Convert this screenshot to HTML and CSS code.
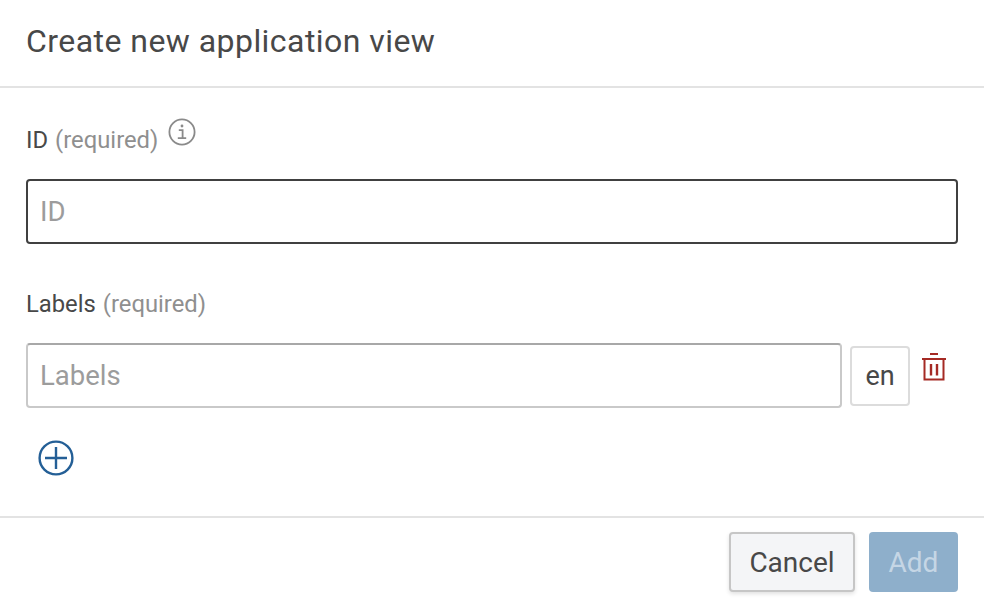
FILE: index.html
```html
<!DOCTYPE html>
<html lang="en">
<head>
    <meta charset="UTF-8">
    <title>Create new application view</title>
    <link rel="stylesheet" href="styles.css">
</head>
<body>
    <div id="dialog">
        <div class="dialog-header">
            <h2>Create new application view</h2>
        </div>

        <div class="dialog-body">
            <div class="field-label id-label">
                <span>ID</span> <span class="required">(required)</span>
                <svg class="info-icon" width="28" height="28" viewBox="0 0 28 28" fill="none" stroke="#8a8a8a">
                    <circle cx="14" cy="14" r="12.6" stroke-width="1.8"/>
                    <circle cx="14" cy="8" r="1.4" fill="#8a8a8a" stroke="none"/>
                    <path d="M10.8 12.2H14.6V20M9.8 20.2H18.2" stroke-width="1.8"/>
                </svg>
            </div>
            <input class="text-input id-input" type="text" placeholder="ID">

            <div class="field-label labels-label">
                <span>Labels</span> <span class="required">(required)</span>
            </div>
            <div class="label-row">
                <input class="text-input label-input" type="text" placeholder="Labels">
                <div class="lang-box">en</div>
                <svg class="trash-icon" width="26" height="30" viewBox="0 0 26 30" fill="none" stroke="#a52a24" stroke-width="2">
                    <path d="M9 2H17"/>
                    <path d="M1 7H25"/>
                    <path d="M3.5 7V27.5H22.5V7"/>
                    <path d="M10 12V23.5M16 12V23.5" stroke-width="2.4"/>
                </svg>
            </div>

            <svg class="add-icon" width="36" height="36" viewBox="0 0 36 36" fill="none" stroke="#245f96" stroke-width="2.4">
                <circle cx="18" cy="18" r="16.4"/>
                <path d="M18 7V29M7 18H29"/>
            </svg>
        </div>

        <div class="dialog-footer">
            <button class="btn btn-cancel">Cancel</button>
            <button class="btn btn-add">Add</button>
        </div>
    </div>
</body>
</html>
```

FILE: styles.css
```css
body {
    margin: 0;
    padding: 0;
    background: #fff;
    font-family: 'Roboto', 'Liberation Sans', sans-serif;
    color: #484848;
    overflow: hidden;
}

#dialog {
    width: 984px;
    height: 604px;
    display: flex;
    flex-direction: column;
}

.dialog-header {
    height: 86px;
    padding: 0 26px;
    display: flex;
    align-items: center;
    border-bottom: 2px solid #e3e3e3;
}

.dialog-header h2 {
    margin: 0 0 4px;
    font-size: 32px;
    font-weight: 400;
    letter-spacing: 0.45px;
}

.dialog-body {
    height: 428px;
    padding: 0 26px;
    border-bottom: 2px solid #e3e3e3;
}

.field-label {
    font-size: 23.8px;
    display: flex;
    align-items: center;
    gap: 7px;
}

.id-label {
    height: 32px;
    margin-top: 36px;
}

.labels-label {
    height: 32px;
    margin-top: 44px;
}

.required {
    color: #8f8f8f;
}

.info-icon {
    margin: -16px 0 0 3px;
}

.text-input {
    display: block;
    box-sizing: border-box;
    height: 65px;
    padding: 0 12px;
    font-family: inherit;
    font-size: 27.5px;
    background: #fff;
    outline: none;
    border-radius: 4px;
}

.text-input::placeholder {
    color: #9c9c9c;
    opacity: 1;
}

.id-input {
    width: 932px;
    margin-top: 23px;
    border: 2px solid #404040;
}

.label-row {
    display: flex;
    align-items: flex-start;
    margin-top: 23px;
}

.label-input {
    width: 816px;
    border: 2px solid #c9c9c9;
    border-top-color: #a8a8a8;
}

.lang-box {
    box-sizing: border-box;
    width: 60px;
    height: 60px;
    margin: 3px 0 0 8px;
    border: 2px solid #dcdcdc;
    border-radius: 4px;
    font-size: 27px;
    display: flex;
    align-items: center;
    justify-content: center;
}

.trash-icon {
    margin: 9px 0 0 11px;
}

.add-icon {
    display: block;
    margin: 32px 0 0 12px;
}

.dialog-footer {
    flex: 1;
    padding: 14px 26px 0 0;
    display: flex;
    justify-content: flex-end;
    align-items: flex-start;
    gap: 14px;
}

.btn {
    height: 60px;
    border-radius: 4px;
    font-family: inherit;
    font-size: 28px;
    padding: 0;
}

.btn-cancel {
    width: 126px;
    background: #f4f5f7;
    color: #484848;
    border: 2px solid #c6c6c6;
    box-shadow: 0 2px 4px rgba(0, 0, 0, 0.12);
}

.btn-add {
    width: 89px;
    background: #8eafcb;
    color: #c5d6e5;
    border: none;
}
```
